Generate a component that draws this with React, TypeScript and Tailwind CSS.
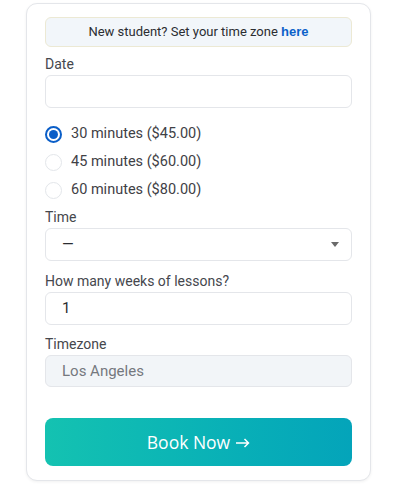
import React from "react";

function Radio({ checked, label }: { checked?: boolean; label: string }) {
  return (
    <div className="flex h-[28px] items-center gap-[8px]">
      {checked ? (
        <span className="flex h-[17px] w-[17px] items-center justify-center rounded-full border-[2px] border-[#0a5ec8] bg-white">
          <span className="h-[9px] w-[9px] rounded-full bg-[#0a5ec8]" />
        </span>
      ) : (
        <span className="h-[17px] w-[17px] rounded-full border border-[#e3e6ea] bg-white" />
      )}
      <span className="ml-[1px] text-[14.5px] text-[#3f4146]">{label}</span>
    </div>
  );
}

function Label({ children }: { children: React.ReactNode }) {
  return <div className="mb-[1px] h-[20px] text-[14px] leading-[20px] text-[#45474d]">{children}</div>;
}

export default function App() {
  return (
    <div className="min-h-[500px] w-[408px] bg-white pt-[3px]" style={{ fontFamily: "Roboto, 'Noto Sans', sans-serif" }}>
      <div className="ml-[26px] w-[345px] rounded-[11px] border border-[#e4e6ea] bg-white px-[18px] pt-[13px] pb-[14px] shadow-[0_1px_3px_rgba(0,0,0,0.06)]">
        <div className="flex h-[30px] items-center justify-center rounded-[6px] border border-[#ece9d4] bg-[#f2f6fa] text-[13px] text-[#2b2d31]">
          New student? Set your time zone&nbsp;<span className="font-bold text-[#0b61c9]" style={{ fontFamily: "'Liberation Sans', Arial, sans-serif" }}>here</span>
        </div>
        <div className="mt-[7px]">
          <Label>Date</Label>
          <div className="h-[33px] rounded-[6px] border border-[#e4e6ea] bg-white" />
        </div>
        <div className="mt-[12px] mb-[3px]">
          <Radio checked label="30 minutes ($45.00)" />
          <Radio label="45 minutes ($60.00)" />
          <Radio label="60 minutes ($80.00)" />
        </div>
        <div>
          <Label>Time</Label>
          <div className="flex h-[33px] items-center justify-between rounded-[6px] border border-[#e4e6ea] bg-white pl-[16px] pr-[12px] text-[15px] text-[#2b2d31]">
            <span>—</span>
            <svg width="8" height="5" viewBox="0 0 8 5"><path d="M0 0H8L4 5Z" fill="#6a6a6a" /></svg>
          </div>
        </div>
        <div className="mt-[10px]">
          <Label>How many weeks of lessons?</Label>
          <div className="flex h-[33px] items-center rounded-[6px] border border-[#e4e6ea] bg-white pl-[16px] text-[15px] text-[#2b2d31]">1</div>
        </div>
        <div className="mt-[9px]">
          <Label>Timezone</Label>
          <div className="flex h-[32px] items-center rounded-[6px] border border-[#e4e6ea] bg-[#f2f5f8] pl-[16px] text-[15px] text-[#75787e]">Los Angeles</div>
        </div>
        <button
          className="mt-[31px] flex h-[48px] w-full items-center justify-center gap-[6px] rounded-[8px] bg-gradient-to-r from-[#14c2b1] to-[#04a4ba] text-[17.5px] text-white"
          style={{ fontFamily: "'Open Sans', sans-serif" }}
        >
          <span>Book Now</span>
          <svg width="14" height="10" viewBox="0 0 14 10" className="mt-[1px]">
            <path d="M0 5H12.5M8.5 1L12.5 5L8.5 9" stroke="white" strokeWidth="1.5" fill="none" />
          </svg>
        </button>
      </div>
    </div>
  );
}
